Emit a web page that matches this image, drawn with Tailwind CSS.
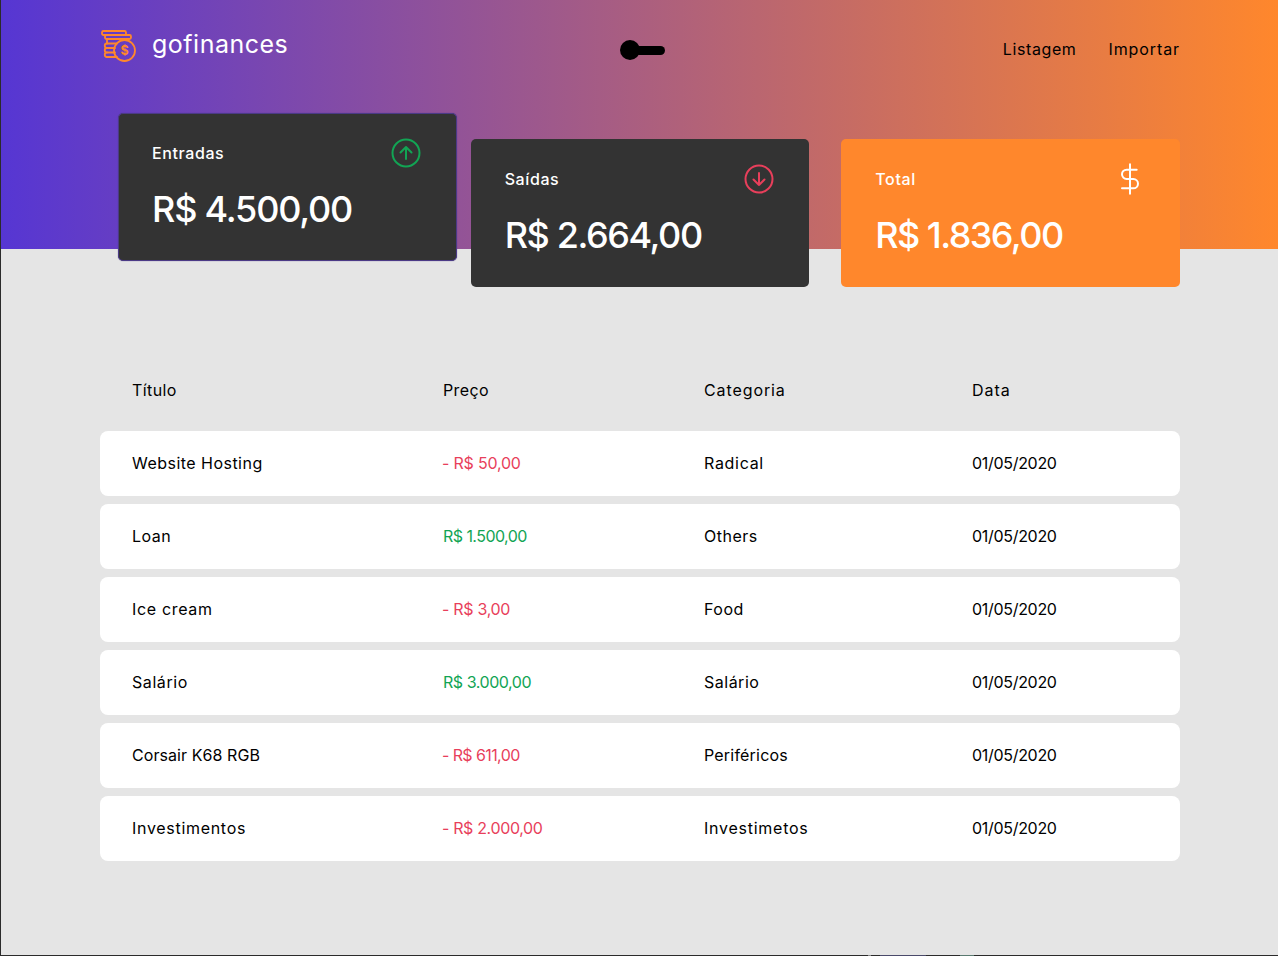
<!DOCTYPE html>
<html lang="pt-BR">
<head>
  <meta charset="UTF-8" />
  <meta name="viewport" content="width=device-width, initial-scale=1.0" />
  <title>gofinances</title>
  <script src="https://cdn.jsdelivr.net/npm/@tailwindcss/browser@4"></script>
</head>
<body class="relative bg-[#e5e5e5] font-['Inter','Liberation_Sans',sans-serif] text-black">
<div class="h-[956px] overflow-hidden border-l border-b border-[#2b2b2b]">
  <header class="h-[249px] bg-[linear-gradient(to_right,#5636d3,#ff872c)]">
    <div class="ml-[99px] w-[1080px] flex items-center justify-between pt-[26px]">
      <div class="flex items-center gap-[15px] h-[40px] pl-[1px]">
        <svg width="36" height="34" viewBox="0 0 36 34" fill="none" stroke="#ff872c" stroke-width="1.800" stroke-linecap="round" stroke-linejoin="round">
          <rect x="1" y="2" width="24" height="4" rx="1.500" />
          <rect x="4" y="6" width="26" height="4" rx="1.500" />
          <path d="M6 10v4.500h10M6 19h8M6 23.500h8M6 28h10" />
          <path d="M6 14.500a2.200 2.200 0 0 0 0 4.500a2.200 2.200 0 0 0 0 4.500a2.200 2.200 0 0 0 0 4.500" />
          <circle cx="23.500" cy="21.500" r="10.500" />
          <text x="23.500" y="26" text-anchor="middle" font-size="12.500" font-weight="700" fill="#ff872c" stroke="none">$</text>
        </svg>
        <span class="text-[25px] leading-none text-white tracking-[0.5px] -translate-y-[2px]">gofinances</span>
      </div>
      <div class="flex items-center translate-x-[-3px] translate-y-[4px]">
        <span class="w-[20px] h-[20px] rounded-full bg-black"></span>
        <span class="w-[30px] h-[9px] -ml-[5px] rounded-full bg-black"></span>
      </div>
      <nav class="flex gap-[32px] text-[16px] leading-[24px] translate-y-[3px]">
        <a href="#" class="tracking-[0.6px]">Listagem</a>
        <a href="#" class="tracking-[0.9px]">Importar</a>
      </nav>
    </div>
  </header>

  <main class="ml-[99px] w-[1080px]">
    <section class="grid grid-cols-3 gap-[32px] -mt-[110px]">
      <div class="h-[148px] pl-[33px] pr-[33px] pt-[23px] rounded-[5px] bg-[#333333] text-white translate-x-[18px] -translate-y-[26px] border border-[#4b3a86] shadow-[0_0_1px_#4b3a86]">
        <div class="flex items-center justify-between">
          <span class="text-[16px] leading-[32px] font-medium tracking-[0.6px]">Entradas</span>
          <svg class="mr-[1px]" width="32" height="32" viewBox="0 0 32 32" fill="none" stroke="#12a454" stroke-width="2" stroke-linecap="round" stroke-linejoin="round">
            <circle cx="16" cy="16" r="13.500" /><path d="M16 22V10M10.500 15.500L16 10l5.500 5.500" />
          </svg>
        </div>
        <p class="mt-[13px] text-[36px] leading-[54px] font-medium tracking-[-1.2px]">R$ 4.500,00</p>
      </div>
      <div class="h-[148px] pl-[34px] pr-[33px] pt-[24px] rounded-[5px] bg-[#333333] text-white">
        <div class="flex items-center justify-between">
          <span class="text-[16px] leading-[32px] font-medium tracking-[0.6px]">Saídas</span>
          <svg class="mr-[1px]" width="32" height="32" viewBox="0 0 32 32" fill="none" stroke="#e83f5b" stroke-width="2" stroke-linecap="round" stroke-linejoin="round">
            <circle cx="16" cy="16" r="13.500" /><path d="M16 10v12M10.500 16.500L16 22l5.500-5.500" />
          </svg>
        </div>
        <p class="mt-[13px] text-[36px] leading-[54px] font-medium tracking-[-1.4px]">R$ 2.664,00</p>
      </div>
      <div class="h-[148px] pl-[34px] pr-[33px] pt-[24px] rounded-[5px] bg-[#ff872c] text-white">
        <div class="flex items-center justify-between">
          <span class="text-[16px] leading-[32px] font-medium tracking-[0.6px]">Total</span>
          <svg class="mr-[1px]" width="32" height="32" viewBox="0 0 24 24" fill="none" stroke="#ffffff" stroke-width="1.500" stroke-linecap="round" stroke-linejoin="round">
            <path d="M12 1v22M17 5H9.500a3.500 3.500 0 0 0 0 7h5a3.500 3.500 0 0 1 0 7H6" />
          </svg>
        </div>
        <p class="mt-[13px] text-[36px] leading-[54px] font-medium tracking-[-1.55px]">R$ 1.836,00</p>
      </div>
    </section>

    <section class="mt-[91px] text-[16px] leading-[24px]">
      <div class="grid grid-cols-[311px_261px_268px_1fr] px-[32px] h-[24px] mb-[29px]">
        <span class="tracking-[0.4px]">Título</span><span class="tracking-[0.4px]">Preço</span><span class="tracking-[0.9px]">Categoria</span><span class="tracking-[1px]">Data</span>
      </div>
      <div class="flex flex-col gap-[8px]">
        <div class="grid grid-cols-[311px_261px_268px_1fr] items-center px-[32px] pb-[2px] h-[65px] rounded-[8px] bg-white">
          <span class="tracking-[0.47px]">Website Hosting</span><span class="-ml-px text-[#e83f5b] tracking-[-0.2px]">- R$ 50,00</span><span class="tracking-[0.7px]">Radical</span><span class="tracking-[-0.3px]">01/05/2020</span>
        </div>
        <div class="grid grid-cols-[311px_261px_268px_1fr] items-center px-[32px] pb-[2px] h-[65px] rounded-[8px] bg-white">
          <span class="tracking-[0.5px]">Loan</span><span class="text-[#12a454] tracking-[-0.55px]">R$ 1.500,00</span><span class="tracking-[0.5px]">Others</span><span class="tracking-[-0.3px]">01/05/2020</span>
        </div>
        <div class="grid grid-cols-[311px_261px_268px_1fr] items-center px-[32px] pb-[2px] h-[65px] rounded-[8px] bg-white">
          <span class="tracking-[0.67px]">Ice cream</span><span class="-ml-px text-[#e83f5b] tracking-[-0.3px]">- R$ 3,00</span><span class="tracking-[0.5px]">Food</span><span class="tracking-[-0.3px]">01/05/2020</span>
        </div>
        <div class="grid grid-cols-[311px_261px_268px_1fr] items-center px-[32px] pb-[2px] h-[65px] rounded-[8px] bg-white">
          <span class="tracking-[0.57px]">Salário</span><span class="text-[#12a454] tracking-[-0.45px]">R$ 3.000,00</span><span class="tracking-[0.5px]">Salário</span><span class="tracking-[-0.3px]">01/05/2020</span>
        </div>
        <div class="grid grid-cols-[311px_261px_268px_1fr] items-center px-[32px] pb-[2px] h-[65px] rounded-[8px] bg-white">
          <span class="tracking-[0.07px]">Corsair K68 RGB</span><span class="-ml-px text-[#e83f5b] tracking-[-0.6px]">- R$ 611,00</span><span class="tracking-[0.2px]">Periféricos</span><span class="tracking-[-0.3px]">01/05/2020</span>
        </div>
        <div class="grid grid-cols-[311px_261px_268px_1fr] items-center px-[32px] pb-[2px] h-[65px] rounded-[8px] bg-white">
          <span class="tracking-[0.7px]">Investimentos</span><span class="-ml-px text-[#e83f5b] tracking-[-0.35px]">- R$ 2.000,00</span><span class="tracking-[0.75px]">Investimetos</span><span class="tracking-[-0.3px]">01/05/2020</span>
        </div>
      </div>
    </section>
  </main>
</div>
<!-- bits of the desktop showing along the bottom edge -->
<span class="absolute bottom-0 left-[868px] w-[3px] h-px bg-[#8a8a8a]"></span>
<span class="absolute bottom-0 left-[880px] w-[46px] h-px bg-[#4a4a6a]"></span>
<span class="absolute bottom-0 left-[960px] w-[14px] h-px bg-[#5a7a70]"></span>
</body>
</html>
